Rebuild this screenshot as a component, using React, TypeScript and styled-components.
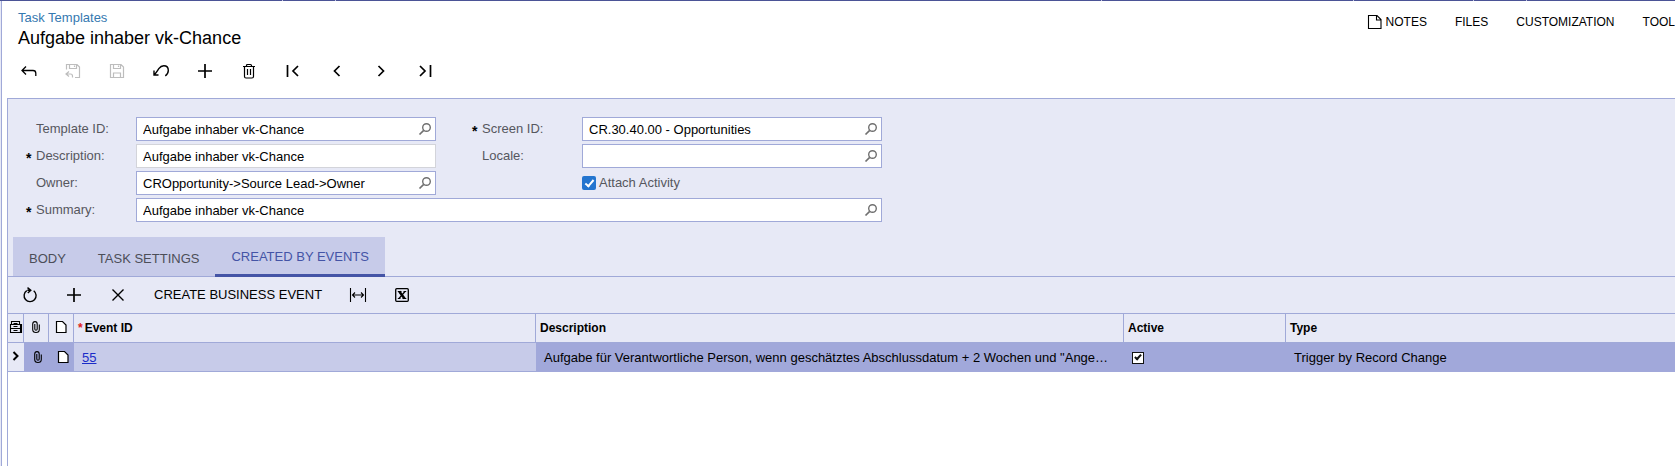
import React from "react";
import styled, { createGlobalStyle, css } from "styled-components";

const color = {
  line: "#a0a9d8",
  panel: "#e7e9f6",
  tab: "#c7cbe9",
  selected: "#a1a8da",
  accent: "#4454a6",
  label: "#56575e",
};

const GlobalStyle = createGlobalStyle`
  *, *::before, *::after { box-sizing: border-box; }
  body {
    margin: 0;
    background: #fff;
    color: #000;
    font: 13px/16px "Liberation Sans", Arial, sans-serif;
  }
  button, input { font: inherit; color: inherit; }
`;

const Page = styled.div`
  display: flex;
  flex-direction: column;
  min-height: 100vh;
  overflow: hidden;
  background: ${color.panel};
`;

const TopBar = styled.div`
  display: flex;
  height: 1px;
  background: #4b5396;
`;

const TopSegment = styled.span<{ $w: number }>`
  flex: 0 1 ${(p) => p.$w}px;
  border-right: 1px solid #c4c8e4;
`;

const Frame = styled.div`
  flex: 1;
  display: flex;
  flex-direction: column;
  margin-left: 1px;
  padding-left: 5px;
  border-left: 1px solid ${color.line};
  background: #fff;
`;

const Header = styled.header`
  display: flex;
  justify-content: space-between;
  align-items: flex-start;
  padding: 9px 0 0 11px;
`;

const Crumb = styled.a`
  display: block;
  color: #3578b0;
  text-decoration: none;
`;

const Title = styled.h1`
  margin: 1px 0 0;
  font-size: 18px;
  line-height: 22px;
  font-weight: 400;
`;

const Menu = styled.nav`
  display: flex;
  gap: 28px;
  padding-top: 4px;
`;

const MenuButton = styled.button`
  display: flex;
  align-items: center;
  gap: 4px;
  padding: 0;
  border: 0;
  background: none;
  font-size: 12px;
  line-height: 16px;
  white-space: nowrap;
`;

const Toolbar = styled.div<{ $grid?: boolean }>`
  display: flex;
  align-items: center;
  ${(p) =>
    p.$grid
      ? css`
          height: 36px;
        `
      : css`
          height: 44px;
          margin-bottom: 5px;
        `}
`;

const IconButton = styled.button`
  display: flex;
  align-items: center;
  justify-content: center;
  width: 44px;
  height: 32px;
  padding: 0;
  border: 0;
  background: none;
  &:disabled { color: #bdbdbd; }
`;

const TextButton = styled.button`
  padding: 0 14px;
  border: 0;
  background: none;
  white-space: nowrap;
`;

const Panel = styled.main`
  flex: 1;
  display: flex;
  flex-direction: column;
  border: solid ${color.line};
  border-width: 1px 0 0 1px;
`;

const Form = styled.form`
  display: grid;
  grid-template-columns: 110px 300px 36px 110px 300px;
  grid-auto-rows: 24px;
  row-gap: 3px;
  padding: 18px 0 15px 18px;
  background: ${color.panel};
`;

const Label = styled.label<{ $col: number; $required?: boolean }>`
  grid-column: ${(p) => p.$col};
  display: flex;
  color: ${color.label};
  line-height: 24px;
  &::before {
    content: "${(p) => (p.$required ? "*" : "")}";
    width: 10px;
    color: #000;
    font-size: 14px;
    font-weight: 700;
    line-height: 28px;
  }
`;

const Field = styled.div<{ $soft?: boolean; $wide?: boolean; $last?: boolean }>`
  display: flex;
  border: 1px solid ${(p) => (p.$soft ? "#d3d4da" : color.line)};
  background: #fff;
  ${(p) => p.$wide && "grid-column: 2 / -1;"}
  ${(p) => p.$last && "grid-column: 5;"}
`;

const TextInput = styled.input`
  flex: 1;
  min-width: 0;
  padding: 1px 0 0 6px;
  border: 0;
  outline: 0;
  background: none;
`;

const LookupButton = styled.button`
  display: flex;
  align-items: center;
  padding: 0 4px;
  border: 0;
  background: none;
  color: #707070;
`;

const CheckLabel = styled.label`
  grid-column: 5;
  display: flex;
  align-items: center;
  gap: 3px;
  color: ${color.label};
`;

const CheckInput = styled.input`
  appearance: none;
  display: grid;
  place-items: center;
  width: 14px;
  height: 14px;
  margin: 0;
  border-radius: 2px;
  background: #2475cf;
  &::before {
    content: "";
    width: 5px;
    height: 9px;
    margin-bottom: 2px;
    border: solid #fff;
    border-width: 0 2px 2px 0;
    transform: rotate(40deg);
  }
`;

const TabStrip = styled.div`
  padding-left: 5px;
  border-bottom: 1px solid ${color.line};
  background: ${color.panel};
`;

const TabList = styled.div`
  display: inline-flex;
  vertical-align: top;
  height: 39px;
  background: ${color.tab};
`;

const Tab = styled.button<{ $active?: boolean }>`
  padding: 4px 16px 0;
  border: 0;
  background: none;
  color: #4c4e58;
  ${(p) =>
    p.$active &&
    css`
      height: 40px;
      padding-top: 3px;
      border-bottom: 3px solid ${color.accent};
      color: ${color.accent};
    `}
`;

const GridArea = styled.section`
  background: ${color.panel};
`;

const Table = styled.table`
  width: 100%;
  table-layout: fixed;
  border-collapse: separate;
  border-spacing: 0;
`;

const Col = styled.col<{ $w?: number }>`
  width: ${(p) => (p.$w ? `${p.$w}px` : "auto")};
`;

const Th = styled.th<{ $icon?: boolean }>`
  height: 30px;
  padding: ${(p) => (p.$icon ? "0 0 2px" : "0 4px")};
  border: solid ${color.line};
  border-width: 1px 1px 1px 0;
  font-size: 12px;
  text-align: ${(p) => (p.$icon ? "center" : "left")};
  &:last-child { border-right: 0; }
`;

const Td = styled.td<{ $icon?: boolean; $tone?: "plain" | "light" }>`
  height: 29px;
  padding: ${(p) => (p.$icon ? "0" : "1px 8px 0")};
  text-align: ${(p) => (p.$icon ? "center" : "left")};
  overflow: hidden;
  white-space: nowrap;
  text-overflow: ellipsis;
  background: ${(p) =>
    p.$tone === "plain" ? color.panel : p.$tone === "light" ? color.tab : color.selected};
  border-bottom: 1px solid ${(p) => (p.$tone ? color.line : color.selected)};
`;

const IndentedIcon = styled.span`
  display: block;
  padding-left: 2px;
`;

const Star = styled.span`
  margin-right: 2px;
  color: #e02020;
`;

const RecordLink = styled.a`
  color: #1a2cc8;
  text-decoration: underline;
`;

const GridCheck = styled.input`
  appearance: none;
  display: grid;
  place-items: center;
  width: 12px;
  height: 12px;
  margin: 0;
  border: 1px solid #111;
  background: #fff;
  &::before {
    content: "";
    width: 4px;
    height: 7px;
    margin-bottom: 2px;
    border: solid #111;
    border-width: 0 2px 2px 0;
    transform: rotate(42deg);
  }
`;

const Svg = styled.svg`
  display: block;
  margin: 0 auto;
  fill: none;
  stroke: currentColor;
  overflow: visible;
`;

const Icon = ({ s = 16, w = 1.4, children }: { s?: number; w?: number; children: React.ReactNode }) => (
  <Svg width={s} height={s} viewBox={`0 0 ${s} ${s}`} strokeWidth={w} aria-hidden>
    {children}
  </Svg>
);

const Back = () => <Icon w={1.3}><path d="M5 3.500 1 7.500l4 4M1.200 7.500H12q2.800 0 2.800 2.800V13" /></Icon>;
const SaveBack = () => (
  <Icon w={1.2}>
    <path d="M1.500 6.500v-5H12L14.500 4v10.500H10M4.500 1.500v4h7v-4M9.500 2.500v1.500M4 8.500 1 11l3 2.500M1 11h4.500q2 0 2 2v1.500" />
  </Icon>
);
const Save = () => (
  <Icon w={1.2}>
    <path d="M1.500 1.500H12L14.500 4v10.500h-13zM4.500 1.500v4h7v-4M9.500 2.500v1.500M4.500 14.500v-4.500h7v4.500" />
  </Icon>
);
const Undo = () => (
  <Icon w={1.4}><path d="M1 7.500v4.500h4.500M1.500 11.500C3.500 9.500 4.500 7.500 5.800 5.700 7.500 3.400 9 2.800 10.800 2.800c2.700 0 4.500 2 4.500 4.700 0 2.200-1 4-3 5.300" /></Icon>
);
const Plus = () => <Icon w={1.7}><path d="M8 1v14M1 8h14" /></Icon>;
const Trash = () => (
  <Icon w={1.2}>
    <path d="M2 3.500h12M5.500 3.500v-1q0-1 1-1h3q1 0 1 1v1M3.500 3.500v10q0 1.500 1.500 1.500h6q1.500 0 1.500-1.500v-10M6.500 6v6M9.500 6v6" />
  </Icon>
);
const First = () => <Icon w={1.7}><path d="M2.500 2v12M13 3 8 8l5 5" /></Icon>;
const Prev = () => <Icon w={1.7}><path d="M10.500 3 5.500 8l5 5" /></Icon>;
const Next = () => <Icon w={1.7}><path d="M5.500 3l5 5-5 5" /></Icon>;
const Last = () => <Icon w={1.7}><path d="M3 3l5 5-5 5M13.500 2v12" /></Icon>;
const Refresh = () => (
  <Icon w={1.4}><path d="M4.800 3.600a6 6 0 1 0 6.900.2M5.500.600l3.300 2.600L5.800 6M8.800 3.200H5.300" /></Icon>
);
const Cross = () => <Icon w={1.4}><path d="M2.500 2.500l11 11M13.500 2.500l-11 11" /></Icon>;
const Fit = () => (
  <Icon w={1.1}><path d="M.5 1v14M15.500 1v14M2.500 8h11M5 5.500 2.500 8 5 10.500M11 5.500 13.500 8 11 10.500" /></Icon>
);
const Excel = () => (
  <Icon s={14} w={1.3}>
    <rect x=".7" y=".7" width="12.600" height="12.600" rx="1" />
    <path d="M4.300 3.500l5.200 7" strokeWidth="2.500" />
    <path d="M10 3.500 4 10.500M2.800 3.500h3.700M8.500 3.500h2.700M2.800 10.500h2.700M7.500 10.500h3.800" strokeWidth="1.200" />
  </Icon>
);
const Magnifier = () => (
  <Icon s={12} w={1.4}><circle cx="7.500" cy="4.500" r="3.800" /><path d="M4.700 7.300.5 11.500" strokeWidth="1.700" /></Icon>
);
const Note = () => (
  <Icon s={14} w={1.1}>
    <path d="M.5.500h8.500l4 4v9H.5zM8.500.500v4.500H13" />
  </Icon>
);
const Sheet = () => (
  <Icon s={12} w={1.2}><path fill="#fff" d="M1.500.500h6l3.500 3.500v7.500h-9.500z" /></Icon>
);
const Clip = () => (
  <Icon s={12} w={1.1}>
    <path d="M4.800 3v5q0 1.200 1.200 1.200T7.200 8V3Q7.200.600 5 .600T2.700 3v5.500q0 3 3.300 3t3.300-3V3.500" />
  </Icon>
);
const Archive = () => (
  <Icon s={12} w={1.1}>
    <path d="M1.500 3.500v-3h8v3M.5 3.500h10v8H.5zM.5 7.500h10M3.500 2.500h4M3.500 5.500h4M3.500 9.500h4M11.500 3v9" />
  </Icon>
);
const RowMark = () => <Icon s={12} w={2}><path d="M3.500 1 7.500 5l-4 4" /></Icon>;

const topSegments = [283, 53, 766, 252, 120, 53];

const actions = [
  { name: "Back", icon: <Back /> },
  { name: "Save and close", icon: <SaveBack />, disabled: true },
  { name: "Save", icon: <Save />, disabled: true },
  { name: "Undo", icon: <Undo /> },
  { name: "Add", icon: <Plus /> },
  { name: "Delete", icon: <Trash /> },
  { name: "First", icon: <First /> },
  { name: "Previous", icon: <Prev /> },
  { name: "Next", icon: <Next /> },
  { name: "Last", icon: <Last /> },
];

interface EntryProps {
  id: string;
  label: string;
  value?: string;
  col: number;
  required?: boolean;
  lookup?: boolean;
  soft?: boolean;
  wide?: boolean;
}

const Entry = ({ id, label, value = "", col, required, lookup = true, soft, wide }: EntryProps) => (
  <>
    <Label htmlFor={id} $col={col} $required={required}>{label}</Label>
    <Field $soft={soft} $wide={wide} $last={col === 4}>
      <TextInput id={id} defaultValue={value} />
      {lookup && (
        <LookupButton type="button" aria-label={`Look up ${label}`}><Magnifier /></LookupButton>
      )}
    </Field>
  </>
);

export default function App() {
  return (
    <Page>
      <GlobalStyle />
      <TopBar>
        {topSegments.map((w, i) => <TopSegment key={i} $w={w} />)}
      </TopBar>
      <Frame>
        <Header>
          <div>
            <Crumb href="#">Task Templates</Crumb>
            <Title>Aufgabe inhaber vk-Chance</Title>
          </div>
          <Menu>
            <MenuButton><Note />NOTES</MenuButton>
            <MenuButton>FILES</MenuButton>
            <MenuButton>CUSTOMIZATION</MenuButton>
            <MenuButton>TOOL</MenuButton>
          </Menu>
        </Header>
        <Toolbar>
          {actions.map((a) => (
            <IconButton key={a.name} aria-label={a.name} disabled={a.disabled}>{a.icon}</IconButton>
          ))}
        </Toolbar>
        <Panel>
          <Form>
            <Entry id="template" label="Template ID:" value="Aufgabe inhaber vk-Chance" col={1} />
            <Entry id="screen" label="Screen ID:" value="CR.30.40.00 - Opportunities" col={4} required />
            <Entry id="description" label="Description:" value="Aufgabe inhaber vk-Chance" col={1} required lookup={false} soft />
            <Entry id="locale" label="Locale:" col={4} />
            <Entry id="owner" label="Owner:" value="CROpportunity->Source Lead->Owner" col={1} />
            <CheckLabel><CheckInput type="checkbox" defaultChecked />Attach Activity</CheckLabel>
            <Entry id="summary" label="Summary:" value="Aufgabe inhaber vk-Chance" col={1} required wide />
          </Form>
          <TabStrip>
            <TabList role="tablist">
              <Tab role="tab">BODY</Tab>
              <Tab role="tab">TASK SETTINGS</Tab>
              <Tab role="tab" aria-selected $active>CREATED BY EVENTS</Tab>
            </TabList>
          </TabStrip>
          <GridArea>
            <Toolbar $grid>
              <IconButton aria-label="Refresh"><Refresh /></IconButton>
              <IconButton aria-label="Add row"><Plus /></IconButton>
              <IconButton aria-label="Delete row"><Cross /></IconButton>
              <TextButton>CREATE BUSINESS EVENT</TextButton>
              <IconButton aria-label="Fit columns"><Fit /></IconButton>
              <IconButton aria-label="Export to Excel"><Excel /></IconButton>
            </Toolbar>
            <Table>
              <colgroup>
                <Col $w={16} /><Col $w={25} /><Col $w={25} /><Col $w={462} /><Col $w={588} /><Col $w={162} /><Col />
              </colgroup>
              <thead>
                <tr>
                  <Th $icon aria-label="Row settings"><Archive /></Th>
                  <Th $icon aria-label="Files"><Clip /></Th>
                  <Th $icon aria-label="Notes"><Sheet /></Th>
                  <Th><Star>*</Star>Event ID</Th>
                  <Th>Description</Th>
                  <Th>Active</Th>
                  <Th>Type</Th>
                </tr>
              </thead>
              <tbody>
                <tr>
                  <Td $icon $tone="plain"><RowMark /></Td>
                  <Td $icon><IndentedIcon><Clip /></IndentedIcon></Td>
                  <Td $icon><IndentedIcon><Sheet /></IndentedIcon></Td>
                  <Td $tone="light"><RecordLink href="#">55</RecordLink></Td>
                  <Td>Aufgabe für Verantwortliche Person, wenn geschätztes Abschlussdatum + 2 Wochen und "Ange…</Td>
                  <Td><GridCheck type="checkbox" aria-label="Active" defaultChecked /></Td>
                  <Td>Trigger by Record Change</Td>
                </tr>
              </tbody>
            </Table>
          </GridArea>
        </Panel>
      </Frame>
    </Page>
  );
}
